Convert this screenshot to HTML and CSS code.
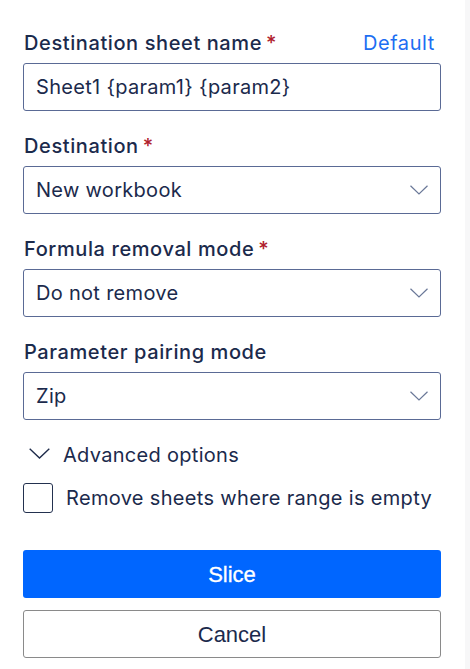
FILE: index.html
```html
<!DOCTYPE html>
<html lang="en">
<head>
<meta charset="utf-8">
<title>Slice</title>
<link rel="stylesheet" href="styles.css">
</head>
<body>
<div class="page">
  <main class="panel">
    <div class="field">
      <div class="label-row">
        <label class="label">Destination sheet name<span class="req">*</span></label>
        <a class="link">Default</a>
      </div>
      <div class="input">Sheet1 {param1} {param2}</div>
    </div>
    <div class="field">
      <div class="label-row">
        <label class="label">Destination<span class="req">*</span></label>
      </div>
      <div class="input select"><span>New workbook</span>
        <svg class="caret" width="18" height="10" viewBox="0 0 18 10"><path d="M0.5 0.8 L9 9 L17.5 0.8" fill="none" stroke="#6a7898" stroke-width="1.2"/></svg>
      </div>
    </div>
    <div class="field">
      <div class="label-row">
        <label class="label">Formula removal mode<span class="req">*</span></label>
      </div>
      <div class="input select"><span>Do not remove</span>
        <svg class="caret" width="18" height="10" viewBox="0 0 18 10"><path d="M0.5 0.8 L9 9 L17.5 0.8" fill="none" stroke="#6a7898" stroke-width="1.2"/></svg>
      </div>
    </div>
    <div class="field">
      <div class="label-row">
        <label class="label">Parameter pairing mode</label>
      </div>
      <div class="input select"><span>Zip</span>
        <svg class="caret" width="18" height="10" viewBox="0 0 18 10"><path d="M0.5 0.8 L9 9 L17.5 0.8" fill="none" stroke="#6a7898" stroke-width="1.2"/></svg>
      </div>
    </div>
    <div class="advanced">
      <svg class="adv-caret" width="21" height="11" viewBox="0 0 21 11"><path d="M0.7 0.8 L10.5 10 L20.3 0.8" fill="none" stroke="#1e2b4a" stroke-width="1.4"/></svg>
      <span>Advanced options</span>
    </div>
    <div class="check-row">
      <span class="checkbox"></span>
      <span>Remove sheets where range is empty</span>
    </div>
    <div class="actions">
      <button class="btn primary">Slice</button>
      <button class="btn secondary">Cancel</button>
    </div>
  </main>
  <div class="strip"></div>
</div>
</body>
</html>
```
FILE: styles.css
```css
html, body {
  margin: 0;
  padding: 0;
  background: #ffffff;
}
.page {
  display: flex;
  width: 470px;
  height: 669px;
}
.panel {
  width: 418px;
  padding: 31px 24px 0 23px;
  display: flex;
  flex-direction: column;
  font-family: Inter, "Noto Sans", sans-serif;
  color: #1b2a4c;
}
.strip {
  flex: 1;
  background: #f7f7f8;
}
.field {
  display: flex;
  flex-direction: column;
  gap: 8px;
  margin-bottom: 23px;
}
.label-row {
  display: flex;
  justify-content: space-between;
  align-items: baseline;
  height: 24px;
}
.label {
  font-size: 20px;
  line-height: 24px;
  font-weight: 500;
  letter-spacing: 0.6px;
  padding-left: 1px;
}
.req {
  color: #b0202c;
  margin-left: 4px;
}
.link {
  font-size: 20px;
  line-height: 24px;
  letter-spacing: 0.6px;
  color: #1d6ef2;
  margin-right: 6px;
}
.input {
  box-sizing: border-box;
  height: 48px;
  border: 1px solid #5a6a95;
  border-radius: 3px;
  padding: 0 12px;
  display: flex;
  align-items: center;
  justify-content: space-between;
  font-size: 20px;
  line-height: 24px;
  letter-spacing: 0.3px;
  color: #1b2a4c;
}
.caret {
  display: block;
}
.advanced {
  display: flex;
  align-items: center;
  gap: 13px;
  height: 24px;
  padding-left: 6px;
  font-size: 20px;
  line-height: 24px;
  letter-spacing: 0.3px;
}
.adv-caret {
  display: block;
  margin-top: -3px;
}
.check-row {
  margin-top: 16px;
  display: flex;
  align-items: center;
  gap: 13px;
  font-size: 20px;
  line-height: 24px;
  letter-spacing: 0.33px;
}
.checkbox {
  box-sizing: border-box;
  width: 30px;
  height: 30px;
  border: 1.5px solid #23314f;
  border-radius: 3px;
}
.actions {
  margin-top: 37px;
  display: flex;
  flex-direction: column;
  gap: 12px;
}
.btn {
  box-sizing: border-box;
  height: 48px;
  width: 100%;
  padding-top: 3px;
  border-radius: 3px;
  font-family: "Liberation Sans", Arial, sans-serif;
  font-size: 22px;
}
.primary {
  background: #0066ff;
  border: none;
  color: #ffffff;
  -webkit-text-stroke: 0.3px #ffffff;
}
.secondary {
  background: #ffffff;
  border: 1px solid #8a8a8a;
  color: #1b2a4c;
}
```
